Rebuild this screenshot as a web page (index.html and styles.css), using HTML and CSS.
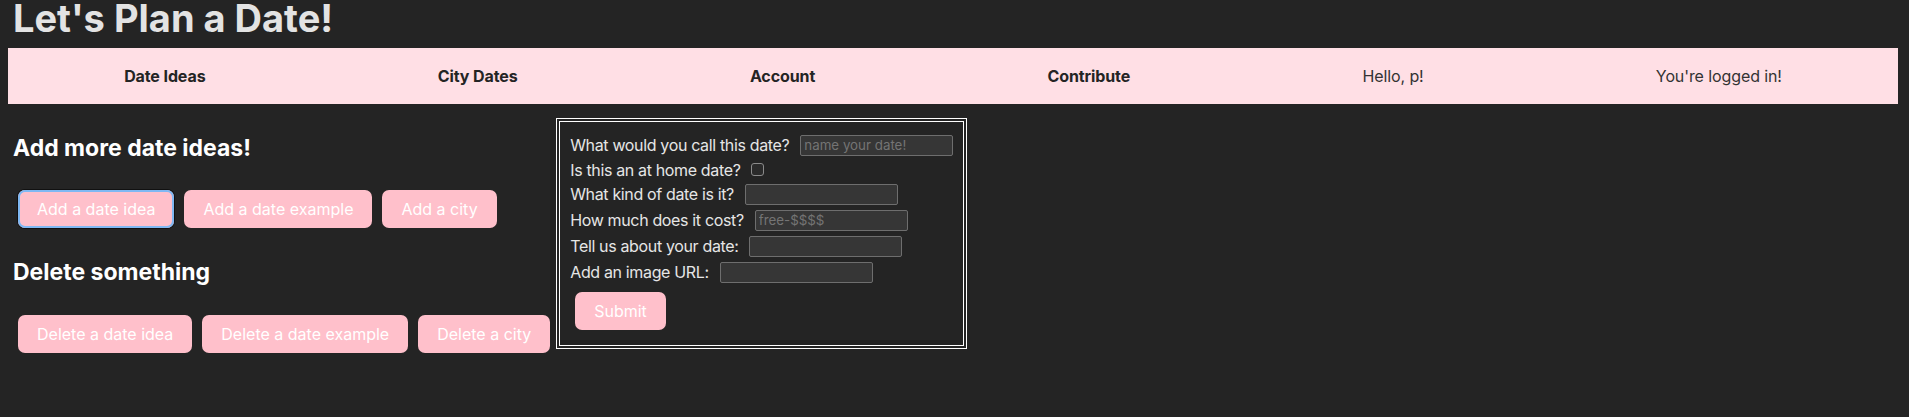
FILE: index.html
```html
<!DOCTYPE html>
<html lang="en">
<head>
<meta charset="utf-8">
<title>Let's Plan a Date!</title>
<link rel="stylesheet" href="styles.css">
</head>
<body>
<header class="site-header">
  <h1 class="title">Let's Plan a Date!</h1>
</header>
<nav class="navbar">
  <a class="nav-link">Date Ideas</a>
  <a class="nav-link">City Dates</a>
  <a class="nav-link">Account</a>
  <a class="nav-link">Contribute</a>
  <span class="nav-text">Hello, p!</span>
  <span class="nav-text">You're logged in!</span>
</nav>
<main class="content">
  <section class="actions">
    <h2 class="section-title add-title">Add more date ideas!</h2>
    <div class="btn-row">
      <button class="pink-btn focused" type="button">Add a date idea</button>
      <button class="pink-btn" type="button">Add a date example</button>
      <button class="pink-btn" type="button">Add a city</button>
    </div>
    <h2 class="section-title delete-title">Delete something</h2>
    <div class="btn-row">
      <button class="pink-btn" type="button">Delete a date idea</button>
      <button class="pink-btn" type="button">Delete a date example</button>
      <button class="pink-btn" type="button">Delete a city</button>
    </div>
  </section>
  <form class="date-form">
    <div class="form-row">
      <label class="form-label">What would you call this date?</label>
      <input class="text-input" type="text" placeholder="name your date!">
    </div>
    <div class="form-row check-row">
      <label class="form-label">Is this an at home date?</label>
      <input class="checkbox" type="checkbox">
    </div>
    <div class="form-row">
      <label class="form-label">What kind of date is it?</label>
      <input class="text-input" type="text">
    </div>
    <div class="form-row">
      <label class="form-label">How much does it cost?</label>
      <input class="text-input" type="text" placeholder="free-$$$$">
    </div>
    <div class="form-row">
      <label class="form-label">Tell us about your date:</label>
      <input class="text-input" type="text">
    </div>
    <div class="form-row">
      <label class="form-label">Add an image URL:</label>
      <input class="text-input" type="text">
    </div>
    <button class="pink-btn submit-btn" type="button">Submit</button>
  </form>
</main>
</body>
</html>
```
FILE: styles.css
```css
html {
  background: #242424;
}

body {
  margin: 0;
  padding: 0 8px;
  background: #242424;
  color: rgba(255, 255, 255, 0.87);
  font-family: Inter, "Noto Sans", sans-serif;
  font-size: 16px;
}

.site-header {
  padding-left: 5px;
}

.title {
  margin: 0;
  font-size: 38px;
  line-height: 37px;
  font-weight: 700;
  color: #e3e3e3;
}

.navbar {
  margin: 11px 3px 0 0;
  height: 56px;
  background: #ffdfe5;
  display: flex;
  justify-content: space-around;
  align-items: center;
  color: #242424;
  font-size: 16px;
}

.nav-link {
  font-weight: 700;
  letter-spacing: -0.1px;
  cursor: pointer;
}

.nav-text {
  font-weight: 400;
  color: #333;
  letter-spacing: -0.1px;
}

.content {
  display: flex;
  align-items: flex-start;
  padding-left: 5px;
}

.actions {
  display: flex;
  flex-direction: column;
  align-items: flex-start;
}

.section-title {
  margin: 0;
  font-size: 23px;
  line-height: 28px;
  font-weight: 700;
  color: #ffffff;
}

.add-title {
  margin-top: 30px;
  margin-bottom: 23px;
}

.delete-title {
  margin-top: 25px;
  margin-bottom: 24px;
}

.btn-row {
  display: flex;
}

.pink-btn {
  margin: 5px;
  padding: 9px 19px;
  border: 0;
  border-radius: 7px;
  background: #ffc0cb;
  color: #ffffff;
  font-family: Inter, "Noto Sans", sans-serif;
  font-size: 16px;
  font-weight: 400;
  line-height: 20px;
  cursor: pointer;
}

.focused {
  box-shadow: inset 0 0 0 2px #7fb8f3, 0 0 0 1px #111111;
}

.date-form {
  margin: 14px 0 0 1px;
  border: 4px double #ffffff;
  padding: 10px;
  display: flex;
  flex-direction: column;
  align-items: flex-start;
}

.form-row {
  display: flex;
  align-items: center;
  gap: 11px;
  height: 26px;
  color: #e6e6e6;
  font-size: 16px;
}

.form-label {
  letter-spacing: -0.35px;
}

.check-row {
  height: 23px;
}

.text-input {
  width: 153px;
  height: 21px;
  box-sizing: border-box;
  margin: 0;
  padding: 1px 3px;
  background: #363636;
  border: 1px solid #6e6e6e;
  border-radius: 2px;
  color: #ffffff;
  font-family: Inter, "Noto Sans", sans-serif;
  font-size: 13.33px;
}

.text-input::placeholder {
  color: #747474;
}

.checkbox {
  appearance: none;
  -webkit-appearance: none;
  width: 13px;
  height: 13px;
  margin: 0;
  border: 1px solid #8a8a8a;
  border-radius: 3px;
  background: #2a2a2a;
}

.submit-btn {
  margin-top: 7px;
}
```
